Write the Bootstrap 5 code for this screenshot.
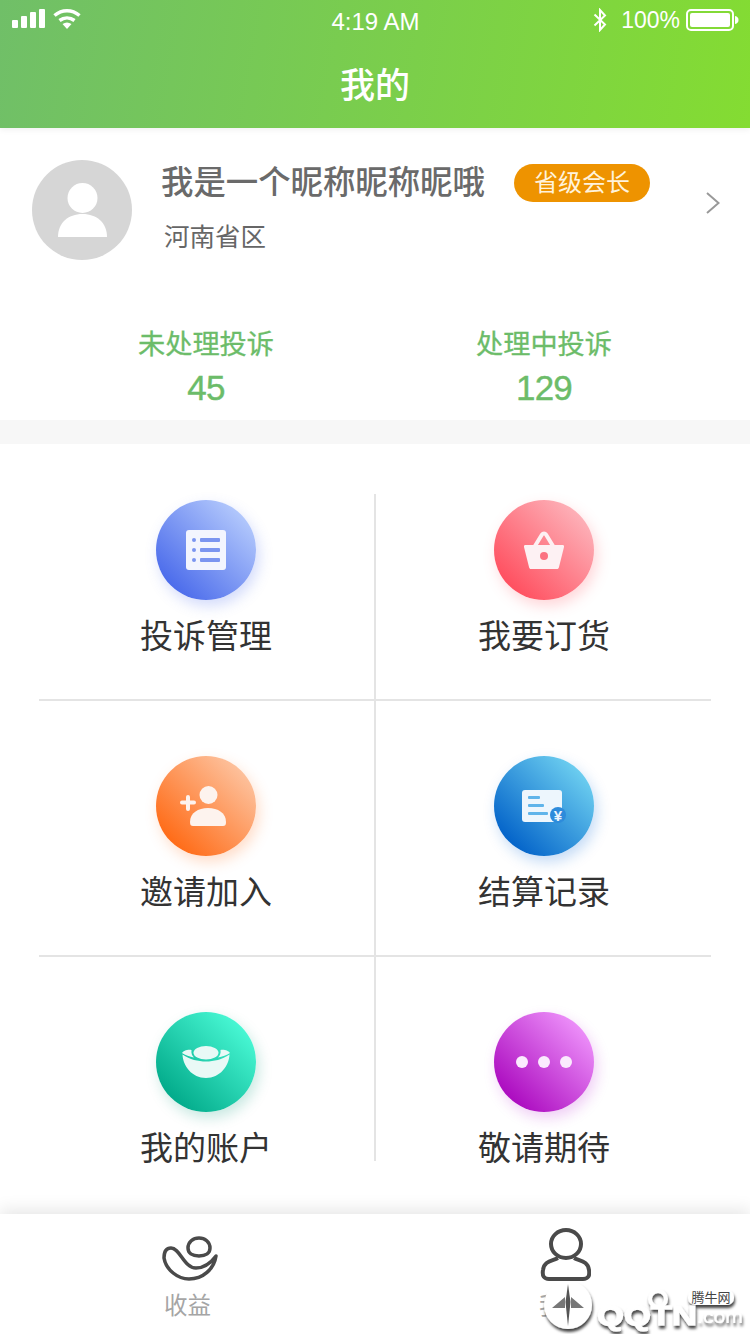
<!DOCTYPE html>
<html lang="zh-CN">
<head>
  <meta charset="UTF-8" />
  <title>我的</title>
  <link href="https://cdn.jsdelivr.net/npm/bootstrap@5.3.2/dist/css/bootstrap.min.css" rel="stylesheet" />
  <style>
    html, body {
      height: 100%;
    }
    body {
      width: 750px;
      height: 1334px;
      overflow: hidden;
      background-color: #fff;
      font-family: "Liberation Sans", "Noto Sans CJK SC", sans-serif;
    }
    .app-top {
      height: 128px;
      background: linear-gradient(100deg, #70bf68 0%, #84dc32 100%);
      color: #fff;
      box-shadow: 0 2px 6px rgba(0, 0, 0, .06);
    }
    .status-row {
      height: 44px;
      padding: 0 11px 0 12px;
      font-size: 23px;
      color: #fff;
    }
    .status-side {
      width: 200px;
      padding-top: 8px;
    }
    .status-time {
      font-size: 24px;
      line-height: 36px;
      padding-top: 4px;
    }
    .status-pct {
      margin-right: 6px;
      margin-left: 14px;
      line-height: 24px;
    }
    .page-title {
      font-size: 35px;
      line-height: 48px;
      margin-top: 18px;
      font-weight: 500;
    }
    .profile-box {
      height: 292px;
      padding-top: 32px;
    }
    .avatar-wrap {
      width: 100px;
      height: 100px;
      margin-left: 32px;
      margin-right: 29px;
      border-radius: 50%;
      background-color: #d6d6d6;
      overflow: hidden;
    }
    .nick-name {
      font-size: 32.4px;
      line-height: 46px;
      color: #6a6a6a;
      font-weight: 500;
    }
    .level-tag {
      width: 136px;
      height: 38px;
      margin-left: 29px;
      border-radius: 19px;
      background-color: #ee9300;
      color: #fff3dc;
      font-size: 24px;
      line-height: 38px;
      text-align: center;
    }
    .area-name {
      font-size: 25.5px;
      line-height: 38px;
      color: #666;
      margin-top: 12px;
      padding-left: 3px;
    }
    .go-arrow {
      margin-top: 32px;
      margin-right: 30px;
    }
    .stat-row {
      margin-top: 66px;
      padding: 0 39px;
      color: #6cbc69;
    }
    .stat-label {
      font-size: 27.2px;
      line-height: 38px;
      -webkit-text-stroke: .3px #6cbc69;
    }
    .stat-num {
      font-size: 35px;
      line-height: 48px;
      letter-spacing: -.8px;
      -webkit-text-stroke: .4px #6cbc69;
    }
    .split-left {
      flex: 0 0 337px;
      width: 337px;
      padding-right: 3px;
    }
    .split-right {
      flex: 0 0 335px;
      width: 335px;
      padding-left: 1px;
    }
    .gap-band {
      height: 24px;
      background-color: #f7f7f7;
    }
    .menu-box {
      padding: 50px 39px 0;
    }
    .menu-cell {
      height: 205px;
      padding-top: 6px;
    }
    .menu-row {
      border-bottom: 2px solid #e4e4e4;
    }
    .menu-cell.split-left {
      border-right: 2px solid #e4e4e4;
      padding-right: 1px;
    }
    .row-mid .menu-cell {
      height: 254px;
      padding-top: 55px;
    }
    .row-last {
      border-bottom: 0;
    }
    .row-last .menu-cell {
      height: 204px;
      padding-top: 55px;
    }
    .menu-disc {
      width: 100px;
      height: 100px;
      border-radius: 50%;
      flex-shrink: 0;
    }
    .menu-text {
      font-size: 33px;
      line-height: 46px;
      color: #333;
      margin-top: 14px;
      flex-shrink: 0;
    }
    .disc-blue {
      background: linear-gradient(45deg, #4566ea 10%, #b8cdfd 90%);
      box-shadow: 3px 6px 14px rgba(80, 110, 240, .25);
    }
    .disc-red {
      background: linear-gradient(45deg, #ff5060 15%, #fdb6bd 90%);
      box-shadow: 3px 6px 14px rgba(255, 90, 105, .25);
    }
    .disc-orange {
      background: linear-gradient(45deg, #ff6c18 15%, #fdc6a4 90%);
      box-shadow: 3px 6px 14px rgba(255, 120, 40, .25);
    }
    .disc-sky {
      background: linear-gradient(45deg, #0060c8 12%, #72d4f2 90%);
      box-shadow: 3px 6px 14px rgba(20, 110, 220, .25);
    }
    .disc-teal {
      background: linear-gradient(45deg, #00a888 12%, #4cfcd8 90%);
      box-shadow: 3px 6px 14px rgba(0, 150, 120, .22);
    }
    .disc-purple {
      background: linear-gradient(45deg, #ac0cc0 15%, #f096fc 90%);
      box-shadow: 3px 6px 14px rgba(180, 30, 210, .22);
    }
    .tab-bar {
      position: absolute;
      left: 0;
      right: 0;
      bottom: 0;
      height: 120px;
      background-color: #fff;
      box-shadow: 0 -4px 16px rgba(0, 0, 0, .1);
    }
    .tab-item {
      padding-bottom: 12px;
    }
    .tab-label {
      font-size: 23.5px;
      line-height: 32px;
      color: #a5a5a5;
      margin-top: 8px;
    }
    .water-mark {
      position: absolute;
      left: 536px;
      top: 1270px;
      width: 214px;
      height: 64px;
    }
    .mark-text {
      font-family: "Liberation Sans", sans-serif;
      font-weight: 700;
      fill: #fff;
      stroke: #fff;
      stroke-width: 1px;
    }
    .mark-com {
      font-family: "Liberation Sans", sans-serif;
      fill: #fff;
    }
  </style>
</head>
<body class="position-relative">

  <!-- Top bar -->
  <div class="app-top position-relative">
    <div class="status-row d-flex justify-content-between align-items-start">
      <div class="status-side d-flex align-items-start gap-2">
        <svg width="33" height="21" viewBox="0 0 33 21"><g fill="#fff"><rect x="0" y="12" width="6" height="8" rx="1"/><rect x="9" y="8" width="6" height="12" rx="1"/><rect x="18" y="4" width="6" height="16" rx="1"/><rect x="27" y="1" width="6" height="19" rx="1"/></g></svg>
        <svg width="28" height="21" viewBox="0 0 28 21"><g fill="none" stroke="#fff" stroke-width="3.500"><path d="M1.500 7.500C9 1 19 1 26.500 7.500"/><path d="M6.500 12.500C11 9 17 9 21.500 12.500"/></g><path d="M9.500 16C12.500 14 15.500 14 18.500 16L14 21Z" fill="#fff"/></svg>
      </div>
      <div class="status-time">4:19 AM</div>
      <div class="status-side d-flex justify-content-end align-items-center">
        <svg width="14" height="24" viewBox="0 0 14 24"><path d="M1.500 6.500L12 16.500L7 22V2L12 7.500L1.500 17.500" fill="none" stroke="#fff" stroke-width="2"/></svg>
        <span class="status-pct">100%</span>
        <svg width="53" height="24" viewBox="0 0 53 24"><rect x="1" y="2" width="46" height="20" rx="4" fill="none" stroke="#fff" stroke-width="2"/><rect x="4" y="5" width="40" height="14" rx="2" fill="#fff"/><path d="M49 8C51.500 8.500 52.500 10 52.500 12S51.500 15.500 49 16Z" fill="#fff"/></svg>
      </div>
    </div>
    <div class="page-title text-center">我的</div>
  </div>

  <!-- Profile -->
  <div class="profile-box">
    <div class="d-flex align-items-start">
      <div class="avatar-wrap flex-shrink-0">
        <svg width="100" height="100" viewBox="0 0 100 100">
          <ellipse cx="50.500" cy="38" rx="15" ry="15" fill="#fff"/>
          <path d="M26 77C26 63 36 54 50.500 54S75 63 75 77Z" fill="#fff"/>
        </svg>
      </div>
      <div class="flex-grow-1">
        <div class="d-flex align-items-center">
          <div class="nick-name">我是一个昵称昵称昵哦</div>
          <div class="level-tag">省级会长</div>
        </div>
        <div class="area-name">河南省区</div>
      </div>
      <svg class="go-arrow flex-shrink-0" width="14" height="22" viewBox="0 0 14 22"><path d="M1 1L12.500 11L1 21" fill="none" stroke="#999" stroke-width="2"/></svg>
    </div>
    <div class="d-flex stat-row text-center">
      <div class="split-left">
        <div class="stat-label">未处理投诉</div>
        <div class="stat-num">45</div>
      </div>
      <div class="split-right">
        <div class="stat-label">处理中投诉</div>
        <div class="stat-num">129</div>
      </div>
    </div>
  </div>

  <div class="gap-band"></div>

  <!-- Menu grid -->
  <div class="menu-box">
    <div class="d-flex menu-row">
      <div class="split-left menu-cell d-flex flex-column align-items-center">
        <div class="menu-disc disc-blue d-flex align-items-center justify-content-center">
          <svg width="40" height="40" viewBox="0 0 40 40">
            <rect width="40" height="40" rx="3" fill="#f3f5fe"/>
            <g fill="#7b95f0"><circle cx="8" cy="10" r="2"/><circle cx="8" cy="20" r="2"/><circle cx="8" cy="30" r="2"/><rect x="14" y="8" width="20" height="4" rx="1"/><rect x="14" y="18" width="20" height="4" rx="1"/><rect x="14" y="28" width="20" height="4" rx="1"/></g>
          </svg>
        </div>
        <div class="menu-text">投诉管理</div>
      </div>
      <div class="split-right menu-cell d-flex flex-column align-items-center">
        <div class="menu-disc disc-red d-flex align-items-center justify-content-center">
          <svg width="40" height="38" viewBox="0 0 40 38">
            <path d="M1 14H39C40 14 40 15 40 16L35 36C34.700 37.500 34 38 33 38H7C6 38 5.300 37.500 5 36L0 16C0 15 0 14 1 14Z" fill="#fdf1f3"/>
            <path d="M11 15L18 3.500C19 2 21 2 22 3.500L29 15" fill="none" stroke="#fdf1f3" stroke-width="4"/>
            <circle cx="20" cy="25" r="4" fill="#fb7281"/>
          </svg>
        </div>
        <div class="menu-text">我要订货</div>
      </div>
    </div>
    <div class="d-flex menu-row row-mid">
      <div class="split-left menu-cell d-flex flex-column align-items-center">
        <div class="menu-disc disc-orange d-flex align-items-center justify-content-center">
          <svg width="52" height="40" viewBox="0 0 52 40">
            <g fill="#fdf3ee"><circle cx="28.500" cy="9" r="9"/><path d="M10 36C10 27 18 22 28 22S46 27 46 36C46 39 45 40 43 40H13C11 40 10 39 10 36Z"/><rect x="0" y="14.500" width="16" height="4" rx="2"/><rect x="6" y="9" width="4" height="16" rx="2"/></g>
          </svg>
        </div>
        <div class="menu-text">邀请加入</div>
      </div>
      <div class="split-right menu-cell d-flex flex-column align-items-center">
        <div class="menu-disc disc-sky d-flex align-items-center justify-content-center">
          <svg width="44" height="33" viewBox="0 0 44 33">
            <path d="M3 0H37C39 0 40 1 40 3V32H3C1 32 0 31 0 29V3C0 1 1 0 3 0Z" fill="#edf6fd"/>
            <g fill="#5fb4ea"><rect x="6" y="6" width="12" height="3" rx="1"/><rect x="6" y="14" width="16" height="3" rx="1"/><rect x="6" y="22" width="20" height="3" rx="1"/></g>
            <circle cx="36" cy="25" r="8" fill="#2d8bdb"/>
            <text x="36" y="30.500" text-anchor="middle" font-size="15" font-weight="700" font-family="Liberation Sans" fill="#edf6fd">¥</text>
          </svg>
        </div>
        <div class="menu-text">结算记录</div>
      </div>
    </div>
    <div class="d-flex menu-row row-last">
      <div class="split-left menu-cell d-flex flex-column align-items-center">
        <div class="menu-disc disc-teal d-flex align-items-center justify-content-center">
          <svg width="48" height="32" viewBox="0 0 48 32">
            <path d="M.500 8.500C8 13.500 16 15.500 24 15.500C32 15.500 40 13.500 47.500 8.500C47 20 38 32 24 32C10 32 1 20 .500 8.500Z" fill="#e9f9f6"/>
            <path d="M0 7C1 5 6 3 9.500 4C9 7 10 9.500 12 11.500C8 10.500 3 9.500 0 7ZM48 7C47 5 42 3 38.500 4C39 7 38 9.500 36 11.500C40 10.500 45 9.500 48 7Z" fill="#e9f9f6"/>
            <ellipse cx="24" cy="6.700" rx="12.500" ry="6.700" fill="#e9f9f6"/>
          </svg>
        </div>
        <div class="menu-text">我的账户</div>
      </div>
      <div class="split-right menu-cell d-flex flex-column align-items-center">
        <div class="menu-disc disc-purple d-flex align-items-center justify-content-center">
          <svg width="56" height="12" viewBox="0 0 56 12"><g fill="#fbeafe"><circle cx="6" cy="6" r="6"/><circle cx="28" cy="6" r="6"/><circle cx="50" cy="6" r="6"/></g></svg>
        </div>
        <div class="menu-text">敬请期待</div>
      </div>
    </div>
  </div>

  <!-- Tab bar -->
  <div class="tab-bar d-flex">
    <div class="tab-item w-50 d-flex flex-column align-items-center justify-content-end">
      <svg width="60" height="46" viewBox="-4 0 60 46">
        <path d="M9 12C3 12 2 18 2 22C4 34 16 43 27 43C41 43 52 33 54 20C48 28 42 32 34 32C22 32 18 12 9 12Z" fill="none" stroke="#4a4a4a" stroke-width="3.500" stroke-linejoin="round"/>
        <path d="M26 12C26 6 31 2 37 2C43 2 48 6 48 12C48 17 44 20 37 20C30 20 26 17 26 12Z" fill="none" stroke="#4a4a4a" stroke-width="3.500"/>
      </svg>
      <div class="tab-label">收益</div>
    </div>
    <div class="tab-item w-50 d-flex flex-column align-items-center justify-content-end">
      <svg width="56" height="54" viewBox="-6 0 56 54">
        <ellipse cx="25" cy="16" rx="15" ry="14" fill="none" stroke="#4a4a4a" stroke-width="4"/>
        <path d="M17 30C11 33 3 33 2 42C1 48 3 51 8 51H42C47 51 49 48 48 42C47 33 39 33 33 30" fill="none" stroke="#4a4a4a" stroke-width="4" stroke-linejoin="round"/>
      </svg>
      <div class="tab-label">我的</div>
    </div>
  </div>

  <!-- Site watermark -->
  <svg class="water-mark" viewBox="0 0 214 64">
    <defs>
      <filter id="markShadow" x="-10%" y="-15%" width="120%" height="140%"><feDropShadow dx="1" dy="3" stdDeviation="1.500" flood-color="#000" flood-opacity=".75"/></filter>
    </defs>
    <g filter="url(#markShadow)">
      <circle cx="32" cy="35" r="24" fill="#fff"/>
      <circle cx="122" cy="29" r="8" fill="none" stroke="#fff" stroke-width="4"/>
      <text class="mark-text" x="61" y="55" font-size="28" textLength="100" lengthAdjust="spacingAndGlyphs">QQTN</text>
      <text class="mark-com" x="161" y="53" font-size="19" textLength="46" lengthAdjust="spacingAndGlyphs">.com</text>
      <rect x="152" y="20" width="46" height="15" rx="7" fill="#fff"/>
    </g>
    <path d="M32 14L34.500 32L32 56L29.500 32Z" fill="#555"/>
    <path d="M16 38L29 27V38ZM48 38L35 27V38Z" fill="#777"/>
    <text x="175" y="32" text-anchor="middle" font-size="13" fill="#444" font-family="Noto Sans CJK SC">腾牛网</text>
  </svg>

</body>
</html>
